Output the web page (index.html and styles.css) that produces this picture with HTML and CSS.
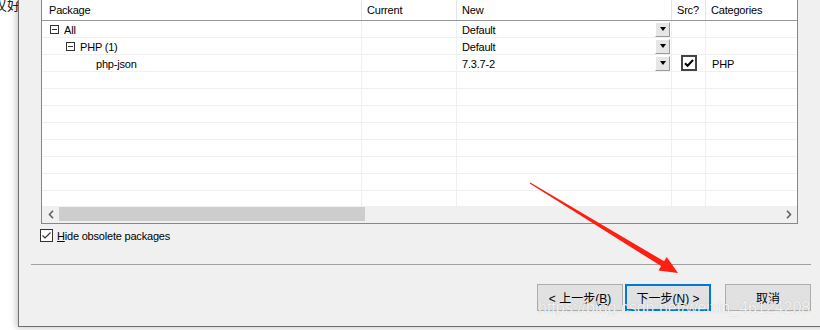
FILE: index.html
```html
<!DOCTYPE html>
<html lang="zh-CN">
<head>
  <meta charset="UTF-8">
  <title>Cygwin Setup - Select Packages</title>
  <link rel="stylesheet" href="styles.css">
</head>
<body>
  <div class="behind">叹好佮</div>

  <div class="dialog">
    <div class="list">
      <div class="head grid">
        <div>Package</div>
        <div>Current</div>
        <div>New</div>
        <div>Src?</div>
        <div>Categories</div>
      </div>
      <div class="rows">
        <div class="row grid">
          <div class="pkg"><span class="tree"></span>All</div>
          <div></div>
          <div>Default<span class="drop"></span></div>
          <div></div>
          <div></div>
        </div>
        <div class="row grid">
          <div class="pkg lvl1"><span class="tree"></span>PHP (1)</div>
          <div></div>
          <div>Default<span class="drop"></span></div>
          <div></div>
          <div></div>
        </div>
        <div class="row grid">
          <div class="pkg lvl2">php-json</div>
          <div></div>
          <div>7.3.7-2<span class="drop"></span></div>
          <div class="src">
            <span class="bigcheck">
              <svg width="12" height="12" viewBox="0 0 12 12"><path d="M2 6.2 L4.6 8.8 L10 3" fill="none" stroke="#000" stroke-width="2"/></svg>
            </span>
          </div>
          <div class="cat">PHP</div>
        </div>
        <div class="row grid"><div></div><div></div><div></div><div></div><div></div></div>
        <div class="row grid"><div></div><div></div><div></div><div></div><div></div></div>
        <div class="row grid"><div></div><div></div><div></div><div></div><div></div></div>
        <div class="row grid"><div></div><div></div><div></div><div></div><div></div></div>
        <div class="row grid"><div></div><div></div><div></div><div></div><div></div></div>
        <div class="row grid"><div></div><div></div><div></div><div></div><div></div></div>
        <div class="row grid"><div></div><div></div><div></div><div></div><div></div></div>
        <div class="row grid"><div></div><div></div><div></div><div></div><div></div></div>
      </div>
      <div class="hscroll">
        <span class="sbtn">
          <svg width="6" height="9" viewBox="0 0 6 9"><path d="M5 0.8 L1.5 4.5 L5 8.2" fill="none" stroke="#606060" stroke-width="1.6"/></svg>
        </span>
        <span class="thumb"></span>
        <span class="sbtn right">
          <svg width="6" height="9" viewBox="0 0 6 9"><path d="M1 0.8 L4.5 4.5 L1 8.2" fill="none" stroke="#606060" stroke-width="1.6"/></svg>
        </span>
      </div>
    </div>

    <label class="option">
      <span class="smallcheck">
        <svg width="11" height="11" viewBox="0 0 11 11"><path d="M1.5 5.5 L4 8 L9.5 2.5" fill="none" stroke="#333" stroke-width="1.1"/></svg>
      </span>
      <span><u>H</u>ide obsolete packages</span>
    </label>

    <div class="sep"></div>

    <div class="buttons">
      <button class="btn">&lt; 上一步(<u>B</u>)</button>
      <button class="btn default">下一步(<u>N</u>) &gt;</button>
      <button class="btn cancel">取消</button>
    </div>
  </div>

  <div class="watermark">https://blog.csdn.net/weixin_46124208</div>

  <svg class="red-arrow" width="820" height="330" viewBox="0 0 820 330">
    <polygon points="530.3,182.4 664.1,261.3 666.7,256.9 678,273 658.5,270.5 661.1,266.1 529.7,183.6" fill="#ff1e12"/>
  </svg>
</body>
</html>
```

FILE: styles.css
```css
body {
  margin: 0;
  width: 820px;
  height: 330px;
  overflow: hidden;
  position: relative;
  display: flex;
  background: #fff;
  font-family: "Liberation Sans", "Noto Sans CJK SC", sans-serif;
  font-size: 11px;
  color: #000;
}

/* page text behind the dialog */
.behind {
  flex: none;
  width: 18px;
  overflow: hidden;
  margin-top: -4px;
  text-indent: -7px;
  white-space: nowrap;
  font-family: "Noto Sans CJK SC", sans-serif;
  font-size: 14px;
  line-height: 16px;
  color: #222;
}

.dialog {
  flex: none;
  width: 830px;
  height: 326px;
  background: #f0f0f0;
  border-left: 1px solid #707070;
  border-bottom: 1px solid #707070;
  box-shadow: -2px 1px 6px rgba(0, 0, 0, 0.22);
}

/* package list */
.list {
  margin: -1px 0 0 22px;
  width: 755px;
  border: 1px solid #828790;
  background: #fff;
}
.grid {
  display: grid;
  grid-template-columns: 320px 95px 215px 34px 91px;
}
.grid > div {
  box-sizing: border-box;
  border-right: 1px solid #f0f0f0;
  overflow: hidden;
  white-space: nowrap;
  padding-left: 5px;
  letter-spacing: -0.2px;
}
.grid > div:last-child {
  border-right: 0;
}
.head {
  height: 21px;
  box-sizing: border-box;
  border-bottom: 1px solid #999;
}
.head > div {
  line-height: 20px;
  border-right-color: #e5e5e5;
}
.head > div:first-child {
  padding-left: 7px;
}
.rows {
  height: 185px;
  overflow: hidden;
}
.row {
  height: 17px;
  box-sizing: border-box;
  border-bottom: 1px solid #f0f0f0;
}
.row > div {
  display: flex;
  align-items: center;
  line-height: 16px;
  padding-top: 1px;
}
.row > div.pkg {
  padding-left: 8px;
}
.row > div.lvl1 {
  padding-left: 24px;
}
.row > div.lvl2 {
  padding-left: 54px;
}
.row > div.cat {
  padding-left: 6px;
}
.tree {
  position: relative;
  flex: none;
  width: 9px;
  height: 9px;
  box-sizing: border-box;
  border: 1px solid #333;
  margin: -1px 5px 0 0;
}
.tree::after {
  content: "";
  position: absolute;
  left: 1px;
  right: 1px;
  top: 3px;
  height: 1px;
  background: #333;
}
.drop {
  display: flex;
  align-items: center;
  justify-content: center;
  flex: none;
  margin: -1px 1px 0 auto;
  width: 15px;
  height: 15px;
  box-sizing: border-box;
  background: #e6e6e6;
  border: 1px solid;
  border-color: #fff #9a9a9a #9a9a9a #fff;
}
.drop::after {
  content: "";
  width: 0;
  height: 0;
  border-top: 4px solid #000;
  border-left: 3.5px solid transparent;
  border-right: 3.5px solid transparent;
}
.row > div.src {
  justify-content: center;
  padding: 0;
}
.bigcheck {
  display: flex;
  align-items: center;
  justify-content: center;
  width: 16px;
  height: 16px;
  box-sizing: border-box;
  border: 2px solid #444;
  background: #fff;
}

/* horizontal scrollbar */
.hscroll {
  display: flex;
  height: 17px;
  background: #f0f0f0;
}
.sbtn {
  display: flex;
  align-items: center;
  justify-content: center;
  width: 17px;
  height: 17px;
}
.sbtn.right {
  margin-left: auto;
}
.thumb {
  width: 306px;
  height: 14px;
  margin-top: 1px;
  background: #cdcdcd;
}

.option {
  display: flex;
  align-items: center;
  gap: 4px;
  height: 13px;
  margin: 5px 0 0 21px;
  letter-spacing: -0.2px;
}
.smallcheck {
  display: flex;
  align-items: center;
  justify-content: center;
  width: 13px;
  height: 13px;
  box-sizing: border-box;
  border: 1px solid #333;
  background: #fff;
}

.sep {
  width: 780px;
  height: 1px;
  margin: 22px 0 0 12px;
  background: #a0a0a0;
}

.buttons {
  display: flex;
  margin: 19px 0 0 518px;
}
.btn {
  width: 86px;
  height: 27px;
  padding: 0;
  box-sizing: border-box;
  border: 1px solid #adadad;
  background: #e1e1e1;
  font-family: "Liberation Sans", "Noto Sans CJK SC", sans-serif;
  font-size: 12px;
  color: #000;
}
.btn + .btn {
  margin-left: 2px;
}
.btn.default {
  border: 2px solid #0078d7;
}
.btn.cancel {
  margin-left: 14px;
}

.watermark {
  position: absolute;
  left: 538px;
  top: 299px;
  font-size: 16px;
  line-height: 18px;
  color: rgba(255, 255, 255, 0.85);
  text-shadow: 0 0 1px rgba(0, 0, 0, 0.25);
  white-space: nowrap;
}

.red-arrow {
  position: absolute;
  left: 0;
  top: 0;
  pointer-events: none;
}
```
